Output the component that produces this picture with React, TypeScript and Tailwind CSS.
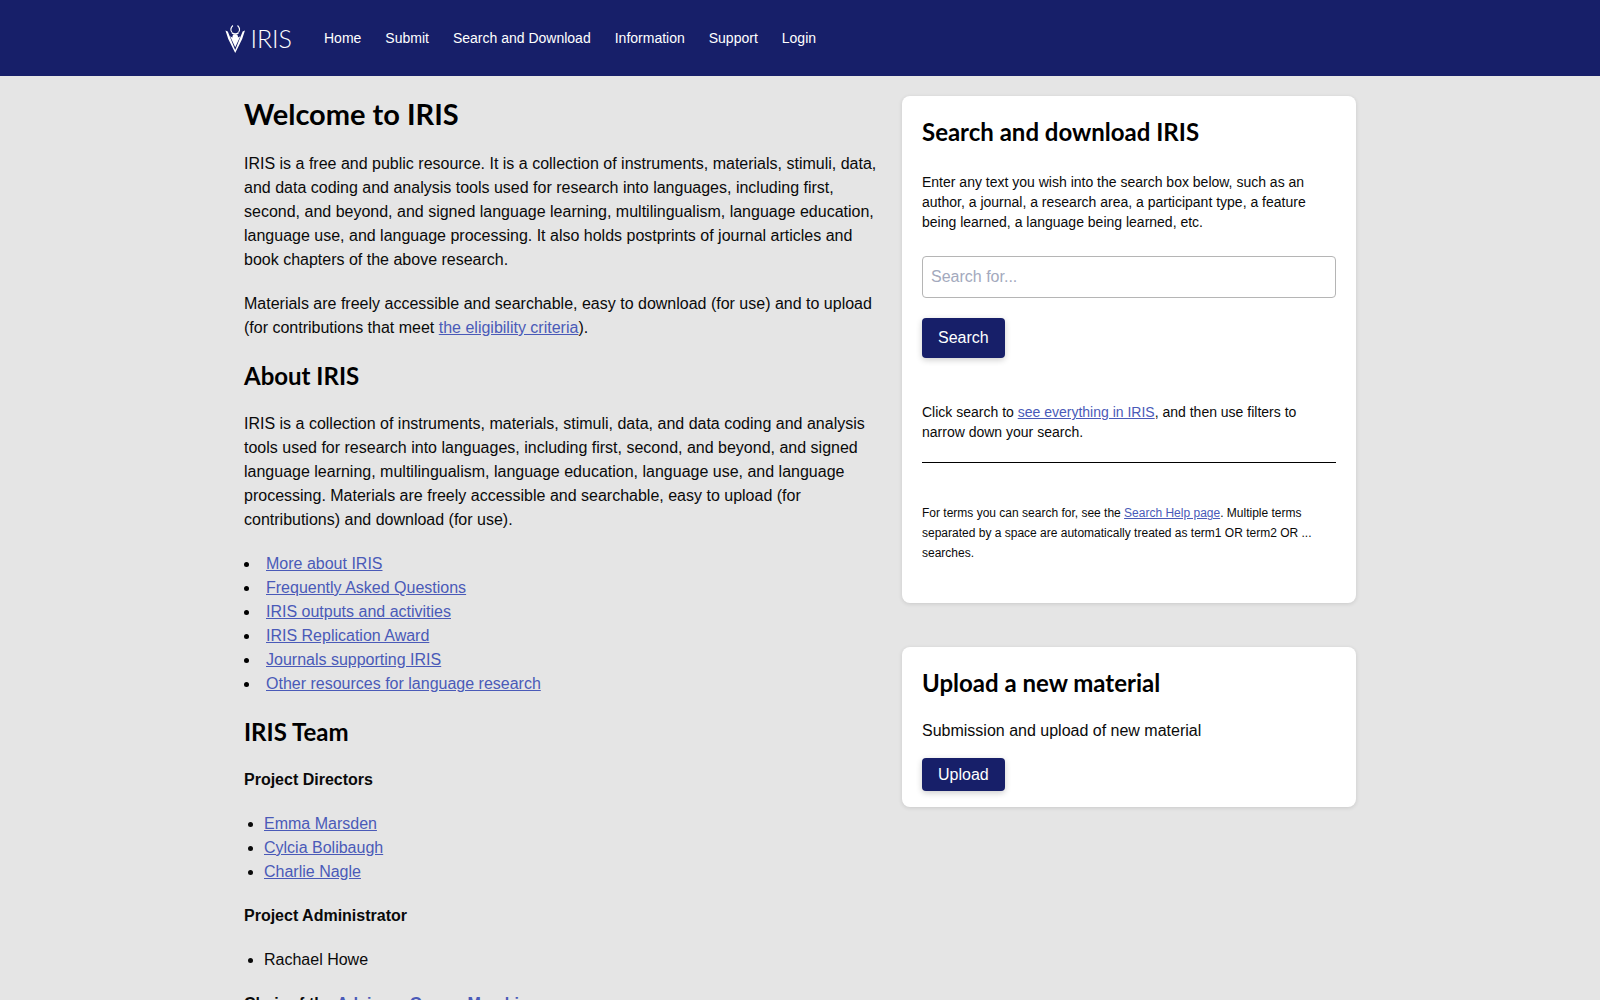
const nav = ["Home", "Submit", "Search and Download", "Information", "Support", "Login"];
const aboutLinks = ["More about IRIS", "Frequently Asked Questions", "IRIS outputs and activities", "IRIS Replication Award", "Journals supporting IRIS", "Other resources for language research"];
const directors = ["Emma Marsden", "Cylcia Bolibaugh", "Charlie Nagle"];

const heading = "font-['Lato',sans-serif] font-bold text-black";
const link = "text-[#4a5ab8] underline";

const Logo = () => (
  <div className="flex w-[67px] items-center gap-[5px] text-white">
    <svg width="22" height="31" viewBox="0 0 22 31" fill="none">
      {/* outer wings running down to the point */}
      <path d="M0.500 7l2.500 1 8 20 8-20 2.500-1-3 9-7.500 15-7.500-15z" fill="white" />
      {/* inner shield */}
      <path d="M5.500 13c2 1 3.500 2 5.500 2s3.500-1 5.500-2l-5.500 12z" fill="white" />
      <circle cx="11" cy="14" r="3" fill="white" />
      {/* horns */}
      <path d="M7.500 9c-1.500-2-1.500-5 1-7.500M14.500 9c1.500-2 1.500-5-1-7.500" stroke="white" strokeWidth="1.200" />
      <path d="M7.500 9.500c2 1.300 5 1.300 7 0" stroke="white" strokeWidth="1.500" />
    </svg>
    <span className="font-['Lato',sans-serif] text-[25px] font-light leading-none">IRIS</span>
  </div>
);

export default function App() {
  return (
    <div className="h-[1000px] overflow-hidden bg-[#e5e5e5] font-['Liberation_Sans',sans-serif] text-[16px] leading-[24px] text-[#0a0a0a]">
      <header className="h-[76px] bg-[#171f69]">
        <div className="mx-auto flex h-full w-[1150px] items-center">
          <Logo />
          <nav className="ml-[32px] flex gap-[24px] text-[14px] text-white">
            {nav.map((n) => (
              <a key={n}>{n}</a>
            ))}
          </nav>
        </div>
      </header>

      <main className="mx-auto flex w-[1150px] px-[19px] pt-[20px]">
        <div className="w-[634px]">
          <h1 className={`${heading} mb-[20px] text-[29px] leading-[36px]`}>Welcome to IRIS</h1>
          <p className="mb-[20px]">
            IRIS is a free and public resource. It is a collection of instruments, materials, stimuli, data, and data coding and analysis tools used for research into languages, including first, second, and beyond, and signed language learning, multilingualism, language education, language use, and language processing. It also holds postprints of journal articles and book chapters of the above research.
          </p>
          <p className="mb-[20px]">
            Materials are freely accessible and searchable, easy to download (for use) and to upload (for contributions that meet <a className={link}>the eligibility criteria</a>).
          </p>
          <h2 className={`${heading} mb-[20px] text-[24px] leading-[32px]`}>About IRIS</h2>
          <p className="mb-[20px]">
            IRIS is a collection of instruments, materials, stimuli, data, and data coding and analysis tools used for research into languages, including first, second, and beyond, and signed language learning, multilingualism, language education, language use, and language processing. Materials are freely accessible and searchable, easy to upload (for contributions) and download (for use).
          </p>
          <ul className="mb-[20px] list-disc pl-[16px] marker:text-black">
            {aboutLinks.map((l) => (
              <li key={l} className="pl-[6px]">
                <a className={link}>{l}</a>
              </li>
            ))}
          </ul>
          <h2 className={`${heading} mb-[20px] text-[24px] leading-[32px]`}>IRIS Team</h2>
          <p className="mb-[20px] font-bold">Project Directors</p>
          <ul className="mb-[20px] list-disc pl-[20px]">
            {directors.map((d) => (
              <li key={d}>
                <a className={link}>{d}</a>
              </li>
            ))}
          </ul>
          <p className="mb-[20px] font-bold">Project Administrator</p>
          <ul className="mb-[20px] list-disc pl-[20px]">
            <li>Rachael Howe</li>
          </ul>
          <p className="font-bold">
            Chair of the <a className={link}>Advisory Group</a>: <a className={link}>Marchi</a>
          </p>
        </div>

        <aside className="ml-[24px] w-[454px]">
          <section className="rounded-[8px] bg-white p-[20px] pb-[40px] shadow-[0_1px_4px_rgba(0,0,0,0.12)]">
            <h2 className={`${heading} mb-[24px] text-[24px] leading-[32px]`}>Search and download IRIS</h2>
            <p className="mb-[24px] text-[14px] leading-[20px]">
              Enter any text you wish into the search box below, such as an author, a journal, a research area, a participant type, a feature being learned, a language being learned, etc.
            </p>
            <input
              placeholder="Search for..."
              className="mb-[20px] block h-[42px] w-full rounded-[4px] border border-[#b5b5b5] px-[8px] text-[16px] placeholder:text-[#a3a9bd]"
            />
            <button className="mb-[44px] block h-[40px] rounded-[4px] bg-[#171f69] px-[16px] text-white shadow-[0_2px_6px_rgba(0,0,0,0.2)]">Search</button>
            <p className="text-[14px] leading-[20px]">
              Click search to <a className={link}>see everything in IRIS</a>, and then use filters to narrow down your search.
            </p>
            <hr className="mt-[20px] mb-[40px] border-black" />
            <p className="text-[12px] leading-[20px]">
              For terms you can search for, see the <a className={link}>Search Help page</a>. Multiple terms separated by a space are automatically treated as term1 OR term2 OR ... searches.
            </p>
          </section>
          <section className="mt-[44px] rounded-[8px] bg-white p-[20px] pb-[16px] shadow-[0_1px_4px_rgba(0,0,0,0.12)]">
            <h2 className={`${heading} mb-[20px] text-[24px] leading-[32px]`}>Upload a new material</h2>
            <p className="mb-[15px]">Submission and upload of new material</p>
            <button className="block h-[33px] rounded-[4px] bg-[#171f69] px-[16px] text-white shadow-[0_2px_6px_rgba(0,0,0,0.2)]">Upload</button>
          </section>
        </aside>
      </main>
    </div>
  );
}
